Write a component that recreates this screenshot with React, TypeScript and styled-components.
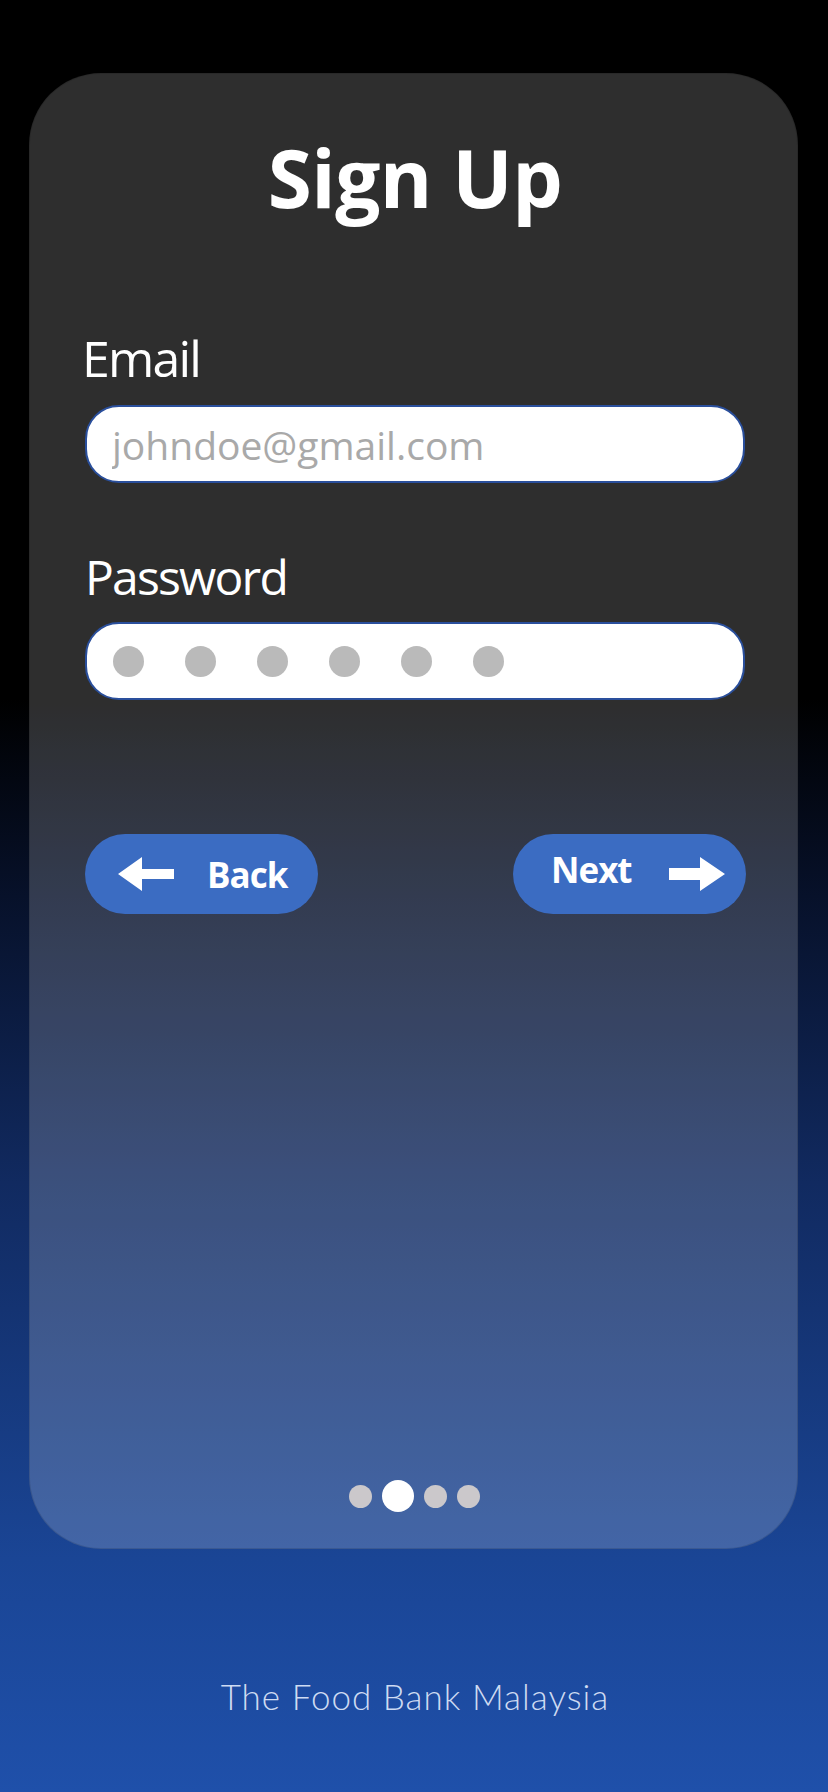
import styled, { createGlobalStyle } from "styled-components";

const GlobalStyle = createGlobalStyle`
  html, body {
    margin: 0;
    padding: 0;
  }
  body {
    font-family: "Open Sans", "Noto Sans", sans-serif;
    background: #000;
  }
`;

const Page = styled.div`
  width: 828px;
  height: 1792px;
  display: flex;
  flex-direction: column;
  align-items: center;
  background: linear-gradient(
    to bottom,
    #000 0%,
    #000 39%,
    #07112a 50%,
    #112a60 66%,
    #1a4595 87%,
    #1f50aa 100%
  );
  overflow: hidden;
`;

const Card = styled.div`
  box-sizing: border-box;
  margin-top: 73px;
  margin-left: -1px;
  width: 769px;
  height: 1476px;
  border-radius: 72px;
  border: 1.5px solid rgba(0, 0, 0, 0.12);
  background: rgba(255, 255, 255, 0.18);
  display: flex;
  flex-direction: column;
  padding: 0 52px 0 55px;
`;

const Title = styled.h1`
  margin: 63px 0 0;
  font-size: 80px;
  line-height: 80px;
  font-weight: 700;
  color: #fff;
  text-align: center;
  letter-spacing: -0.5px;
`;

const Label = styled.label<{ $gap: number; $size: number; $shift: number }>`
  display: block;
  margin-top: ${(p) => p.$gap}px;
  margin-left: ${(p) => p.$shift}px;
  font-size: ${(p) => p.$size}px;
  line-height: ${(p) => p.$size}px;
  color: #fff;
  letter-spacing: -1.8px;
`;

const Field = styled.input`
  box-sizing: border-box;
  margin-top: 22px;
  width: 660px;
  height: 78px;
  border-radius: 34px;
  border: 2px solid #2a4f9c;
  background: #fff;
  padding: 0 0 0 25px;
  font-family: "Open Sans", sans-serif;
  font-size: 39px;
  color: #333;
  outline: none;
  &::placeholder {
    color: #a9a9a9;
  }
`;

const SecretField = styled.div`
  box-sizing: border-box;
  margin-top: 21px;
  width: 660px;
  height: 78px;
  border-radius: 34px;
  border: 2px solid #2a4f9c;
  background: #fff;
  display: flex;
  align-items: center;
  gap: 41px;
  padding-left: 26px;
`;

const Dot = styled.span`
  width: 31px;
  height: 31px;
  border-radius: 50%;
  background: #bababa;
`;

const ButtonRow = styled.div`
  margin-top: 134px;
  width: 661px;
  display: flex;
  justify-content: space-between;
`;

const NavButton = styled.button<{ $pad: string; $gap: number; $lift: number }>`
  box-sizing: border-box;
  width: 233px;
  height: 80px;
  border: none;
  border-radius: 40px;
  background: #3b6cc2;
  color: #fff;
  display: flex;
  align-items: center;
  padding: ${(p) => p.$pad};
  gap: ${(p) => p.$gap}px;
  font-family: "Open Sans", sans-serif;
  font-weight: 700;
  font-size: 35px;
  letter-spacing: -1px;
  cursor: pointer;
  span {
    position: relative;
    top: ${(p) => -p.$lift}px;
    line-height: 1;
  }
  svg {
    flex-shrink: 0;
  }
`;

const Pager = styled.div`
  margin-top: auto;
  margin-bottom: 36px;
  display: flex;
  justify-content: center;
  align-items: center;
  gap: 10px;
  padding-right: 2px;
`;

const PageDot = styled.span<{ $active?: boolean }>`
  width: ${(p) => (p.$active ? 32 : 23)}px;
  height: ${(p) => (p.$active ? 32 : 23)}px;
  border-radius: 50%;
  background: ${(p) => (p.$active ? "#fff" : "#cbc8cb")};
`;

const Footer = styled.div`
  margin-top: 130px;
  font-family: "Lato", sans-serif;
  font-weight: 300;
  font-size: 35px;
  line-height: 35px;
  color: rgba(232, 240, 255, 0.88);
  letter-spacing: 1px;
  padding-left: 2px;
`;

const Arrow = ({ dir }: { dir: "left" | "right" }) => (
  <svg width="56" height="34" viewBox="0 0 56 34">
    <polygon
      fill="#fff"
      points={
        dir === "right"
          ? "0,11 31,11 31,0 56,17 31,34 31,23 0,23"
          : "56,12 24,12 24,0 0,17 24,34 24,22 56,22"
      }
    />
  </svg>
);

export default function App() {
  return (
    <>
      <GlobalStyle />
      <Page>
        <Card>
          <Title>Sign Up</Title>
          <Label $gap={116} $size={50} $shift={-3}>
            Email
          </Label>
          <Field placeholder="johndoe@gmail.com" />
          <Label $gap={70} $size={48} $shift={0}>
            Password
          </Label>
          <SecretField>
            {[0, 1, 2, 3, 4, 5].map((i) => (
              <Dot key={i} />
            ))}
          </SecretField>
          <ButtonRow>
            <NavButton $pad="0 0 0 33px" $gap={33} $lift={0}>
              <Arrow dir="left" />
              <span>Back</span>
            </NavButton>
            <NavButton $pad="0 0 0 38px" $gap={37} $lift={5}>
              <span>Next</span>
              <Arrow dir="right" />
            </NavButton>
          </ButtonRow>
          <Pager>
            <PageDot />
            <PageDot $active />
            <PageDot />
            <PageDot />
          </Pager>
        </Card>
        <Footer>The Food Bank Malaysia</Footer>
      </Page>
    </>
  );
}
